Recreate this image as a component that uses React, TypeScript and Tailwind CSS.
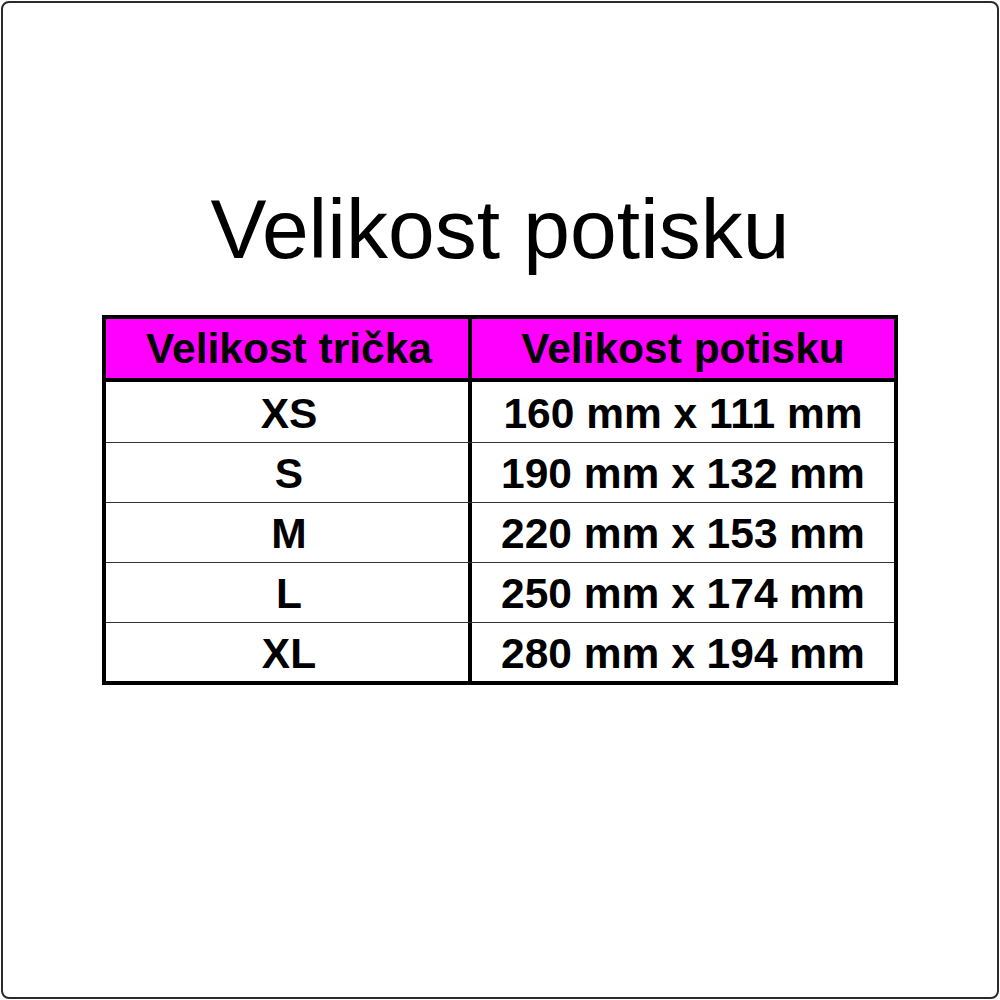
const rows = [
  ["XS", "160 mm x 111 mm"],
  ["S", "190 mm x 132 mm"],
  ["M", "220 mm x 153 mm"],
  ["L", "250 mm x 174 mm"],
  ["XL", "280 mm x 194 mm"],
]

export default function App() {
  return (
    <div className="w-[1000px] h-[1000px] bg-white p-px font-['Liberation_Sans',Arial,sans-serif] text-black">
      <div className="h-full border-2 border-[#2b2b2b] rounded-[8px] flex flex-col items-center pt-[184px]">
        <h1 className="text-[84px] leading-none font-normal">Velikost potisku</h1>

        <div className="mt-[44px] w-[796px] border-4 border-black">
          {/* header */}
          <div className="flex h-[63px] bg-[#ff00ff] border-b-4 border-black text-[42.5px] font-bold">
            <div className="w-[358px] border-r-4 border-black flex items-center justify-center box-content pl-[4px]">
              Velikost trička
            </div>
            <div className="flex-1 flex items-center justify-center">
              Velikost potisku
            </div>
          </div>

          {rows.map(([size, print], i) => (
            <div
              key={size}
              className={
                "flex text-[42.5px] font-bold " +
                (i === 0 ? "h-[60px]" : i === rows.length - 1 ? "h-[59px] border-t border-[#333]" : "h-[60px] border-t border-[#333]")
              }
            >
              <div className="w-[358px] border-r-4 border-black flex items-center justify-center box-content pt-[3px] pl-[4px]">
                {size}
              </div>
              <div className="flex-1 flex items-center justify-center pt-[3px]">{print}</div>
            </div>
          ))}
        </div>
      </div>
    </div>
  )
}
